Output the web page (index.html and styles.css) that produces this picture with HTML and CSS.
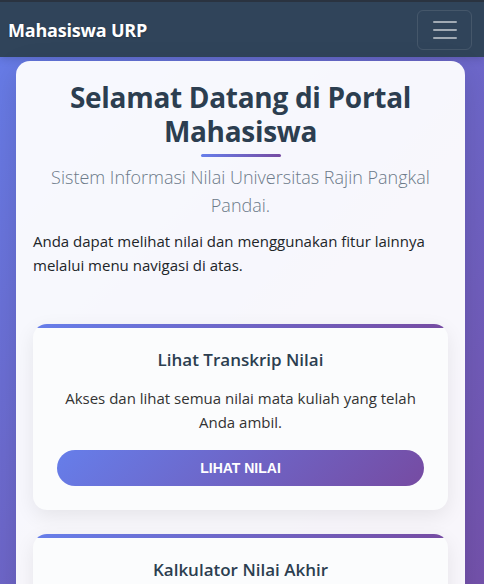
FILE: index.html
```html
<!DOCTYPE html>
<html lang="id">
<head>
<meta charset="utf-8">
<title>Portal Mahasiswa</title>
<link rel="stylesheet" href="styles.css">
</head>
<body>
<nav class="navbar">
  <a class="brand" href="#">Mahasiswa URP</a>
  <button class="toggler" aria-label="Menu">
    <svg width="30" height="30" viewBox="0 0 30 30"><path d="M4 7h22M4 15h22M4 23h22" stroke="rgba(255,255,255,0.55)" stroke-width="2" stroke-linecap="round"/></svg>
  </button>
</nav>
<main class="container">
  <h1 class="title">Selamat Datang di Portal Mahasiswa</h1>
  <div class="title-bar"></div>
  <p class="lead">Sistem Informasi Nilai Universitas Rajin Pangkal Pandai.</p>
  <p class="intro">Anda dapat melihat nilai dan menggunakan fitur lainnya melalui menu navigasi di atas.</p>
  <div class="features">
    <div class="feature-card">
      <h5 class="feature-title">Lihat Transkrip Nilai</h5>
      <p class="feature-text">Akses dan lihat semua nilai mata kuliah yang telah Anda ambil.</p>
      <a class="btn" href="#">Lihat Nilai</a>
    </div>
    <div class="feature-card">
      <h5 class="feature-title">Kalkulator Nilai Akhir</h5>
      <p class="feature-text">Hitung nilai akhir mata kuliah berdasarkan komponen penilaian.</p>
      <a class="btn" href="#">Hitung Nilai</a>
    </div>
  </div>
</main>
</body>
</html>
```
FILE: styles.css
```css
* { box-sizing: border-box; }
html, body { margin: 0; padding: 0; }
body {
  font-family: "Open Sans", "Noto Sans", sans-serif;
  background: linear-gradient(135deg, #667eea 0%, #764ba2 100%);
  min-height: 100vh;
  color: #212529;
}
.navbar {
  height: 57px;
  background: #30445a;
  border-top: 2px solid #2a3340;
  display: flex;
  align-items: center;
  justify-content: space-between;
  padding: 0 12px 0 8px;
  box-shadow: 0 2px 8px rgba(0,0,0,0.15);
}
.brand {
  color: #fff;
  font-weight: 700;
  font-size: 18px;
  text-decoration: none;
  letter-spacing: -0.2px;
  text-shadow: 0 1px 2px rgba(0,0,0,0.3);
}
.toggler {
  width: 55px;
  height: 40px;
  background: transparent;
  border: 1px solid rgba(255,255,255,0.1);
  border-radius: 6px;
  display: flex;
  align-items: center;
  justify-content: center;
  padding: 0;
}
.container {
  margin: 4px 19px 0 16px;
  background: rgba(255,255,255,0.95);
  border-radius: 14px;
  padding: 19px 17px 20px;
  box-shadow: 0 8px 30px rgba(0,0,0,0.12);
}
.title {
  margin: 0;
  text-align: center;
  font-size: 28px;
  line-height: 34px;
  font-weight: 700;
  color: #2c3e50;
  letter-spacing: -0.3px;
}
.title-bar {
  width: 80px;
  height: 3px;
  border-radius: 2px;
  margin: 6px auto 0;
  background: linear-gradient(90deg, #667eea, #764ba2);
}
.lead {
  margin: 6px 0 0;
  text-align: center;
  font-size: 18px;
  line-height: 28px;
  font-weight: 300;
  color: #6c7a89;
}
.intro {
  margin: 10px 0 0;
  font-size: 15px;
  line-height: 24px;
}
.features {
  margin-top: 47px;
  display: flex;
  flex-direction: column;
  gap: 24px;
}
.feature-card {
  position: relative;
  overflow: hidden;
  border-radius: 14px;
  background: #fbfcfd;
  box-shadow: 0 6px 20px rgba(0,0,0,0.08);
  padding: 23px 24px 24px;
  text-align: center;
}
.feature-card::before {
  content: "";
  position: absolute;
  left: 0;
  right: 0;
  top: 0;
  height: 4px;
  background: linear-gradient(90deg, #667eea, #764ba2);
}
.feature-title {
  margin: 0;
  font-size: 17px;
  line-height: 26px;
  font-weight: 600;
  color: #2c3e50;
}
.feature-text {
  margin: 13px 0 16px;
  font-size: 15px;
  line-height: 24px;
  color: #333;
}
.btn {
  display: block;
  height: 36px;
  line-height: 36px;
  border-radius: 18px;
  background: linear-gradient(135deg, #667eea 0%, #764ba2 100%);
  color: #fff;
  text-decoration: none;
  text-transform: uppercase;
  font-family: "Liberation Sans", Arial, sans-serif;
  font-weight: 700;
  font-size: 14px;
}
```
